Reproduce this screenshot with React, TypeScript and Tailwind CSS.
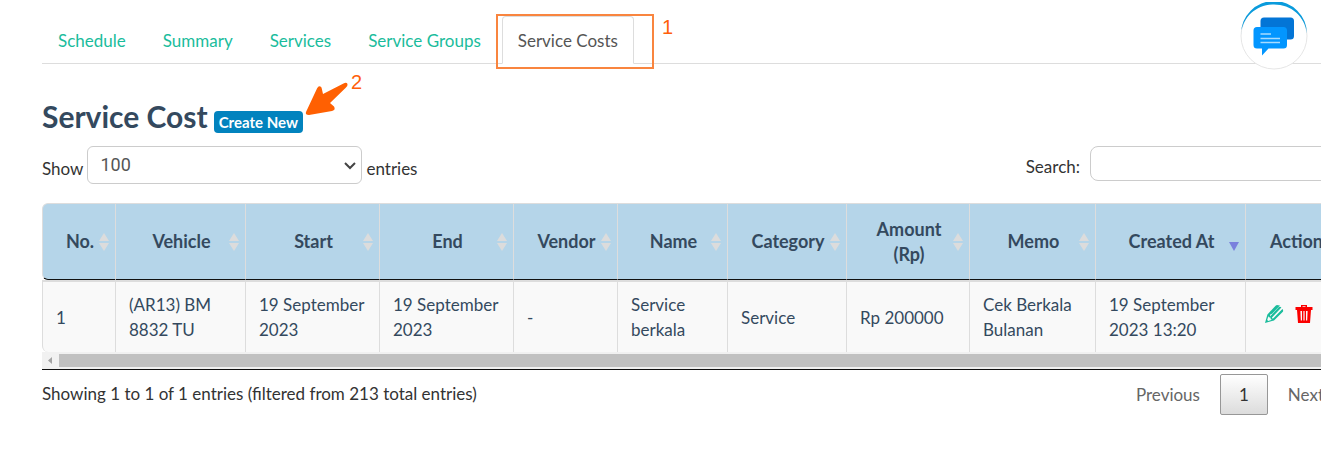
import { useState } from 'react'
import clsx from 'clsx'

const TABS = ['Schedule', 'Summary', 'Services', 'Service Groups', 'Service Costs']

type SortState = 'both' | 'desc' | 'none'

const COLUMNS: { label: string; width: string; sort: SortState }[] = [
  { label: 'No.', width: 'w-[74px]', sort: 'both' },
  { label: 'Vehicle', width: 'w-[130px]', sort: 'both' },
  { label: 'Start', width: 'w-[134px]', sort: 'both' },
  { label: 'End', width: 'w-[134px]', sort: 'both' },
  { label: 'Vendor', width: 'w-[104px]', sort: 'both' },
  { label: 'Name', width: 'w-[110px]', sort: 'both' },
  { label: 'Category', width: 'w-[119px]', sort: 'both' },
  { label: 'Amount (Rp)', width: 'w-[123px]', sort: 'both' },
  { label: 'Memo', width: 'w-[126px]', sort: 'both' },
  { label: 'Created At', width: 'w-[150px]', sort: 'desc' },
  { label: 'Action', width: 'w-auto', sort: 'none' },
]

const ROWS = [
  ['1', '(AR13) BM 8832 TU', '19 September 2023', '19 September 2023', '-', 'Service berkala', 'Service', 'Rp 200000', 'Cek Berkala Bulanan', '19 September 2023 13:20'],
]

function SortIcon({ state }: { state: SortState }) {
  return (
    <svg viewBox="0 0 10 18" className="h-[18px] w-2.5 shrink-0" aria-hidden="true">
      {state === 'both' && <path d="M5 0 L10 8 H0 Z M0 10 H10 L5 18 Z" fill="#dcdcdc" />}
      {state === 'desc' && <path d="M0 9 H10 L5 18 Z" fill="#7a80dd" />}
    </svg>
  )
}

function PencilIcon() {
  return (
    <svg viewBox="0 0 20 20" className="size-5" aria-hidden="true">
      <path d="M1 19 L3.4 10.4 L11.6 1.8 Q12.6 .8 14 1.2 L16 1.4 L8 9.8 L6.2 10.4 L6 12.4 L15 3 Q16.4 2.2 17.4 3.6 L8 13.4 L8.2 14.4 L9.4 14.2 L18.4 5 Q19.8 6.6 18.6 8 L10 16.4 Z" fill="#1abc9c" />
      <path d="M4.4 12 L3.2 16 L4.2 17 L8.2 15.6 L6.8 15.2 L6.4 13.6 L4.8 13.2 Z" fill="#f9f9f9" />
    </svg>
  )
}

function TrashIcon() {
  return (
    <svg viewBox="0 0 18 18" className="size-[18px]" aria-hidden="true">
      <path
        fillRule="evenodd"
        d="M6 0 H12 V2 H17.5 V5 H16 L15 18 H3 L2 5 H.5 V2 H6 Z M7.5 1.2 V2 H10.5 V1.2 Z M5.4 6 L5.8 15.5 H7 V6 Z M8.4 6 V15.5 H9.6 V6 Z M11 6 V15.5 H12.2 L12.6 6 Z"
        fill="#fb0000"
      />
    </svg>
  )
}

function ChatBubble() {
  return (
    <button type="button" aria-label="Open chat" className="absolute top-0.5 right-[13px]">
      <svg viewBox="0 0 68 68" className="size-[68px]">
        <circle cx="34" cy="34" r="33" fill="#fff" stroke="#e6e6e6" />
        <path d="M1 32 A33 33 0 0 1 67 32 C65 14 51 2.500 34 2.500 C17 2.500 3 14 1 32 Z" fill="#0a9bdc" />
        <rect x="20.500" y="15.500" width="33.500" height="22" rx="3.500" fill="#0375d6" />
        <path d="M17 25 H43.500 Q47 25 47 28.500 V43 Q47 46.500 43.500 46.500 H28.500 L22 53.500 V46.500 H17 Q13.500 46.500 13.500 43 V28.500 Q13.500 25 17 25 Z" fill="#0396ff" />
        <path d="M20.500 32 H31 M20.500 36.500 H40 M20.500 40.500 H40" stroke="#a8dcff" strokeWidth="1.600" />
      </svg>
    </button>
  )
}

export default function App() {
  const [active, setActive] = useState('Service Costs')
  const [length, setLength] = useState('100')
  const [search, setSearch] = useState('')

  return (
    <div className="relative overflow-hidden bg-white pt-4 pb-10 pl-[42px] font-['Lato',sans-serif] text-[17px]/[25px] text-[#333]">
      <div className="-mr-[25px]">
        <ul className="flex gap-[5px] border-b border-[#ddd]">
          {TABS.map((tab) => (
            <li key={tab} className="relative -mb-px">
              <a
                href="#"
                onClick={() => setActive(tab)}
                className={clsx(
                  'block rounded-t border px-[15px] pt-[11px] pb-2.5',
                  tab === active ? 'border-[#ddd] border-b-white bg-white text-[#555]' : 'border-transparent text-[#1abc9c]',
                )}
              >
                {tab}
              </a>
              {tab === 'Service Costs' && (
                <>
                  <span className="pointer-events-none absolute -top-0.5 -right-5 -bottom-[5px] -left-1.5 border-2 border-[#f9853f]" />
                  <span className="absolute top-0 left-full ml-7 font-['Liberation_Sans',sans-serif] text-xl/[22px] text-[#ff5f0a]">1</span>
                </>
              )}
            </li>
          ))}
        </ul>

        <h2 className="mt-[34px] flex items-baseline gap-1.5 text-[30px]/[36px] font-bold text-[#34495e]">
          Service Cost
          <span className="relative">
            <a href="#" className="block rounded bg-[#0283be] px-[5px] text-[15px]/[22px] text-white">
              Create New
            </a>
            <svg viewBox="0 0 46 36" className="absolute bottom-[17px] left-full h-9 w-[46px]" aria-hidden="true">
              <path d="M3 32 L14 8.500 Q16 4.500 18.500 7.500 L20 14 L40.500 3.500 Q43.500 2 44.500 4 Q45 6 42.500 8 L27 23 L31 26.500 Q33 30 29 31 L6 35 Q2 35 3 32 Z" fill="#ff6002" />
            </svg>
            <span className="absolute bottom-10 left-full ml-12 font-['Liberation_Sans',sans-serif] text-xl/[22px] font-normal text-[#ff5f0a]">2</span>
          </span>
        </h2>

        <div className="mt-3 flex items-start justify-between">
          <label className="flex items-center gap-1">
            <span className="pt-1.5">Show</span>
            <span className="relative">
              <select
                value={length}
                onChange={(e) => setLength(e.target.value)}
                className="h-[38px] w-[275px] appearance-none rounded-md border border-[#ccc] bg-white px-3 font-['Roboto',sans-serif] text-lg text-[#555]"
              >
                <option>10</option>
                <option>25</option>
                <option>50</option>
                <option>100</option>
              </select>
              <svg viewBox="0 0 12 8" className="pointer-events-none absolute top-4 right-1.5 h-2 w-3" aria-hidden="true">
                <path d="M1 1 L6 6 L11 1" fill="none" stroke="#444" strokeWidth="2" />
              </svg>
            </span>
            <span className="pt-1.5">entries</span>
          </label>
          <label className="flex items-center gap-2.5">
            <span className="pt-1.5">Search:</span>
            <input
              type="search"
              value={search}
              onChange={(e) => setSearch(e.target.value)}
              className="h-[35px] w-64 rounded-lg border border-[#ccc] bg-white px-3"
            />
          </label>
        </div>

        <div className="mt-[19px] border-b border-[#111]">
          <table className="w-full table-fixed border-separate border-spacing-0 text-[#34495e]">
            <thead>
              <tr>
                {COLUMNS.map((col) => (
                  <th
                    key={col.label}
                    className={clsx(
                      col.width,
                      'h-[77px] border-t border-r border-b border-t-[#ddd] border-r-[#ddd] border-b-[#111] bg-[#b5d5e9] pr-1.5 pl-2 text-lg/[25px] font-bold first:rounded-l-md first:border-l first:border-l-[#ddd]',
                    )}
                  >
                    <div className="flex items-center">
                      <span className="w-2.5 shrink-0" />
                      <span className="flex-1">{col.label}</span>
                      <SortIcon state={col.sort} />
                    </div>
                  </th>
                ))}
              </tr>
            </thead>
            <tbody>
              {ROWS.map((row) => (
                <tr key={row[0]}>
                  {row.map((cell, i) => (
                    <td
                      key={i}
                      className="h-[72px] border-t-2 border-r border-[#ddd] bg-[#f9f9f9] pr-2 pl-[13px] first:rounded-bl-md first:border-l"
                    >
                      {cell}
                    </td>
                  ))}
                  <td className="border-t-2 border-r border-[#ddd] bg-[#f9f9f9] pb-1.5 pl-[18px]">
                    <div className="flex items-center gap-[11px]">
                      <a href="#" aria-label="Edit"><PencilIcon /></a>
                      <button type="button" aria-label="Delete"><TrashIcon /></button>
                    </div>
                  </td>
                </tr>
              ))}
            </tbody>
          </table>
          <div className="flex h-[17px] items-center bg-[#f1f1f1]">
            <svg viewBox="0 0 17 17" className="size-[17px]" aria-hidden="true">
              <path d="M10 5 V12 L6 8.500 Z" fill="#a3a3a3" />
            </svg>
            <div className="h-[13px] flex-1 bg-[#c1c1c1]" />
          </div>
        </div>

        <div className="flex items-start justify-between pt-1">
          <p className="pt-[7px]">Showing 1 to 1 of 1 entries (filtered from 213 total entries)</p>
          <nav className="flex items-center gap-0.5 text-[#666]">
            <button type="button" className="px-[18px] py-2">Previous</button>
            <button type="button" className="rounded-xs border border-[#979797] bg-linear-to-b from-white to-[#dcdcdc] px-[18px] py-[7px] text-[#333]">
              1
            </button>
            <button type="button" className="py-2 pr-[22px] pl-[18px]">Next</button>
          </nav>
        </div>
      </div>
      <ChatBubble />
    </div>
  )
}
